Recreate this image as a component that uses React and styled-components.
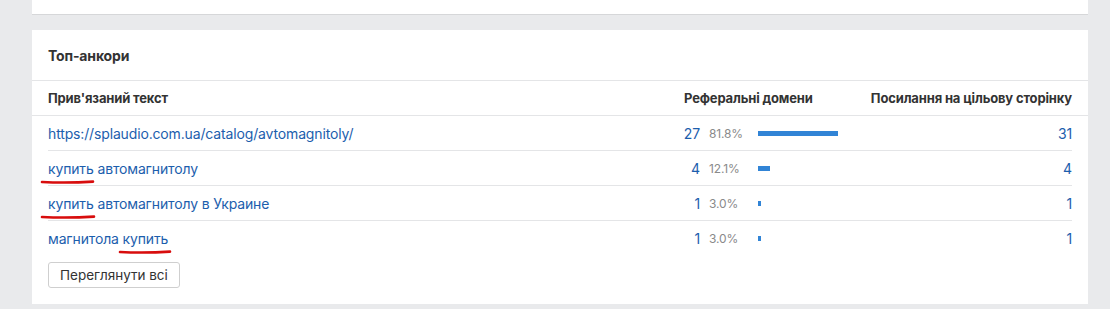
import React from "react";
import styled, { createGlobalStyle } from "styled-components";

const Global = createGlobalStyle`
  html, body { margin: 0; padding: 0; background: #e9eaec; }
  body { font-family: Inter, "Noto Sans", sans-serif; color: #333; letter-spacing: -0.15px; }
`;

const Page = styled.div`
  display: flex;
  flex-direction: column;
  gap: 16px;
  padding: 0 22px 0 32px;
`;

const Card = styled.section`
  background: #fff;
  box-shadow: 0 1px 0 #d6d7d9;
  height: ${(p) => (p.$stub ? "14px" : "auto")};
`;

const CardTitle = styled.h3`
  margin: 0;
  height: 50px;
  display: flex;
  align-items: center;
  padding: 0 16px;
  font-size: 14px;
  font-weight: 700;
  color: #333;
  border-bottom: 1px solid #e4e5e7;
`;

const Grid = styled.div`
  display: grid;
  grid-template-columns: 1fr 162px 234px;
  align-items: center;
`;

const HeadRow = styled(Grid)`
  height: 34px;
  padding: 0 16px;
  border-bottom: 1px solid #e4e5e7;
  font-size: 13px;
  font-weight: 700;
  color: #333;
`;

const HeadCell = styled.div`
  text-align: ${(p) => (p.$right ? "right" : "left")};
  padding-left: ${(p) => (p.$pad ? "8px" : "0")};
  white-space: nowrap;
`;

const Body = styled.div`
  padding: 0 16px 16px;
`;

const Row = styled(Grid)`
  height: 34px;
  border-bottom: ${(p) => (p.$last ? "none" : "1px solid #e4e5e7")};
  font-size: 14px;
`;

const LinkText = styled.a`
  color: #1c5ead;
  text-decoration: none;
  white-space: nowrap;
`;

const Marked = styled.span`
  position: relative;
  display: inline-block;
`;

const Underline = styled.svg`
  position: absolute;
  left: ${(p) => p.$left}px;
  top: 19px;
  width: ${(p) => p.$w}px;
  height: 6px;
  overflow: visible;
`;

const DomainCell = styled.div`
  display: flex;
  align-items: center;
`;

const Num = styled.span`
  width: 24px;
  text-align: right;
  color: #1c5ead;
  font-size: 14px;
`;

const Pct = styled.span`
  width: 40px;
  margin-left: 9px;
  color: #8a8a8a;
  font-size: 12px;
`;

const BarTrack = styled.div`
  width: 80px;
  margin-left: 9px;
  display: flex;
`;

const Bar = styled.div`
  height: 5px;
  background: #3184d6;
`;

const RightNum = styled.div`
  text-align: right;
  color: #1c5ead;
  font-size: 14px;
`;

const Button = styled.button`
  margin-top: 7px;
  height: 26px;
  padding: 0 11px;
  background: #fff;
  border: 1px solid #cfcfcf;
  border-radius: 3px;
  font-family: Inter, "Noto Sans", sans-serif;
  font-size: 13.5px;
  letter-spacing: 0;
  color: #333;
  cursor: pointer;
`;

const Mark = ({ left = -7, w = 53 }) => (
  <Underline $left={left} $w={w} viewBox={`0 0 ${w} 6`}>
    <path
      d={`M1 3 Q ${w / 2} 4.2 ${w - 1} 2.6`}
      stroke="#d80d0d"
      strokeWidth="2.6"
      fill="none"
      strokeLinecap="round"
    />
  </Underline>
);

const rows = [
  { text: ["https://splaudio.com.ua/catalog/avtomagnitoly/"], n: 27, pct: "81.8%", w: 80, links: 31 },
  { text: [<Marked key="m">купить<Mark /></Marked>, " автомагнитолу"], n: 4, pct: "12.1%", w: 12, links: 4 },
  { text: [<Marked key="m">купить<Mark w={54} /></Marked>, " автомагнитолу в Украине"], n: 1, pct: "3.0%", w: 3, links: 1 },
  { text: ["магнитола ", <Marked key="m">купить<Mark left={-4} w={52} /></Marked>], n: 1, pct: "3.0%", w: 3, links: 1 },
];

export default function App() {
  return (
    <>
      <Global />
      <Page>
        <Card $stub />
        <Card>
          <CardTitle>Топ-анкори</CardTitle>
          <HeadRow>
            <HeadCell>Прив'язаний текст</HeadCell>
            <HeadCell $pad>Реферальні домени</HeadCell>
            <HeadCell $right>Посилання на цільову сторінку</HeadCell>
          </HeadRow>
          <Body>
            {rows.map((r, i) => (
              <Row key={i} $last={i === rows.length - 1}>
                <div>
                  <LinkText href="#">{r.text}</LinkText>
                </div>
                <DomainCell>
                  <Num>{r.n}</Num>
                  <Pct>{r.pct}</Pct>
                  <BarTrack>
                    <Bar style={{ width: `${r.w}px` }} />
                  </BarTrack>
                </DomainCell>
                <RightNum>{r.links}</RightNum>
              </Row>
            ))}
            <Button>Переглянути всі</Button>
          </Body>
        </Card>
      </Page>
    </>
  );
}
